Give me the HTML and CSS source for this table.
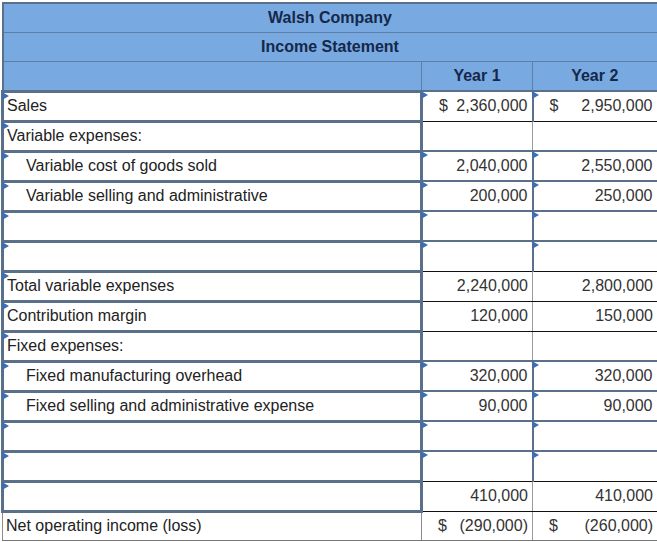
FILE: index.html
```html
<!DOCTYPE html>
<html>
<head>
<meta charset="utf-8">
<title>Walsh Company Income Statement</title>
<link rel="stylesheet" href="styles.css">
</head>
<body>
<table class="stmt">
  <colgroup><col class="c-label"><col class="c-y1"><col class="c-y2"></colgroup>
  <thead>
    <tr class="hr"><th colspan="3" class="full top">Walsh Company</th></tr>
    <tr class="hr"><th colspan="3" class="full">Income Statement</th></tr>
    <tr class="hr hr3"><th class="first"></th><th>Year 1</th><th class="last">Year 2</th></tr>
  </thead>
  <tbody>
    <tr><td class="lbl in">Sales</td><td class="val in"><div class="money"><span>$</span><span>2,360,000</span></div></td><td class="val in"><div class="money"><span>$</span><span>2,950,000</span></div></td></tr>
    <tr><td class="lbl in">Variable expenses:</td><td class="val"></td><td class="val"></td></tr>
    <tr><td class="lbl in ind">Variable cost of goods sold</td><td class="val in">2,040,000</td><td class="val in">2,550,000</td></tr>
    <tr><td class="lbl in ind">Variable selling and administrative</td><td class="val in">200,000</td><td class="val in">250,000</td></tr>
    <tr><td class="lbl in"></td><td class="val in"></td><td class="val in"></td></tr>
    <tr><td class="lbl in"></td><td class="val in"></td><td class="val in"></td></tr>
    <tr><td class="lbl in">Total variable expenses</td><td class="val">2,240,000</td><td class="val">2,800,000</td></tr>
    <tr><td class="lbl in">Contribution margin</td><td class="val">120,000</td><td class="val">150,000</td></tr>
    <tr><td class="lbl in">Fixed expenses:</td><td class="val"></td><td class="val"></td></tr>
    <tr><td class="lbl in ind">Fixed manufacturing overhead</td><td class="val in">320,000</td><td class="val in">320,000</td></tr>
    <tr><td class="lbl in ind">Fixed selling and administrative expense</td><td class="val in">90,000</td><td class="val in">90,000</td></tr>
    <tr><td class="lbl in"></td><td class="val in"></td><td class="val in"></td></tr>
    <tr><td class="lbl in"></td><td class="val in"></td><td class="val in"></td></tr>
    <tr><td class="lbl in"></td><td class="val">410,000</td><td class="val">410,000</td></tr>
    <tr class="last-row"><td class="lbl plain">Net operating income (loss)</td><td class="val"><div class="money"><span>$</span><span>(290,000)</span></div></td><td class="val"><div class="money"><span>$</span><span>(260,000)</span></div></td></tr>
  </tbody>
</table>
</body>
</html>
```

FILE: styles.css
```css
html, body {
  margin: 0;
  padding: 0;
  background: #ffffff;
}

.stmt {
  border-collapse: collapse;
  table-layout: fixed;
  width: 655px;
  margin: 2px 0 0 1px;
  font-family: "Liberation Sans", Arial, sans-serif;
  font-size: 16px;
  color: #222222;
}

.c-label { width: 419px; }
.c-y1 { width: 111px; }
.c-y2 { width: 125px; }

.stmt th {
  background: #79a9e1;
  color: #15284a;
  font-weight: bold;
  text-align: center;
  padding: 0;
  border: 1px solid #5d7ea6;
}

.stmt th.full,
.stmt th.first {
  border-left: 2px solid #5a6f8a;
}

.stmt th.full,
.stmt th.last {
  border-right: 2px solid #5a6f8a;
}

.stmt th.top {
  border-top: 2px solid #5a6f8a;
}

.hr { height: 29px; }
.hr3 { height: 30px; }

.stmt tbody tr { height: 30px; }
.stmt tbody tr.last-row { height: 29px; }

.stmt td {
  position: relative;
  padding: 0 4px;
  white-space: nowrap;
}

.lbl {
  border: 3px solid #5a6f8a;
  padding-left: 3px !important;
}

.lbl.ind {
  padding-left: 22px !important;
}

.lbl.plain {
  border: 1px solid #8c8c8c;
}

.val {
  text-align: right;
  color: #333333;
  border: 1px solid #9a9a9a;
  border-top-color: #111111;
  border-bottom-color: #111111;
}

.val.in {
  border: 2px solid #5a6f8a;
  border-bottom: 1px solid #111111;
}

.last-row .val,
.last-row .lbl {
  border-bottom: 1px solid #777777;
}

.in::before {
  content: "";
  position: absolute;
  top: -1px;
  left: -2px;
  width: 0;
  height: 0;
  border-left: 7px solid #3e6db2;
  border-top: 4px solid transparent;
  border-bottom: 4px solid transparent;
}

.money {
  display: flex;
  justify-content: space-between;
  padding-left: 12px;
}
```
